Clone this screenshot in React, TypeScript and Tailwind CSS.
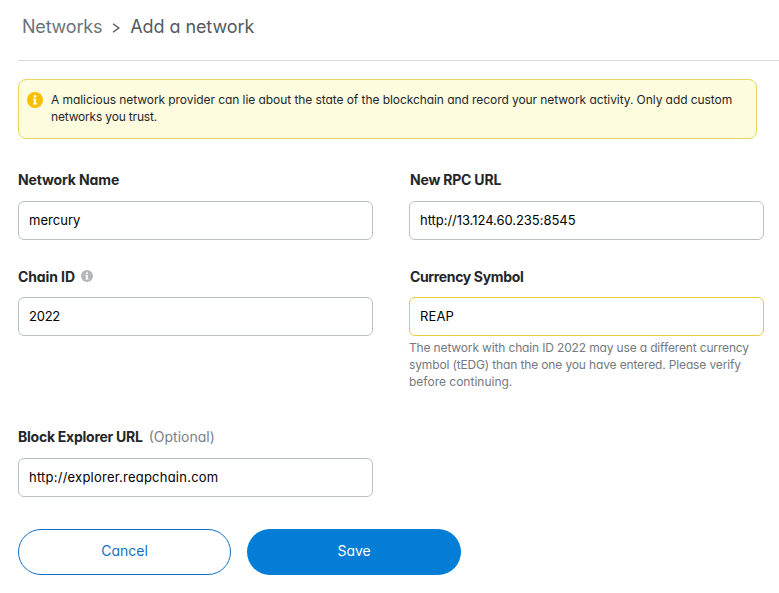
import type { ReactNode } from 'react';

function InfoIcon({ className }: { className: string }) {
  return (
    <svg viewBox="0 0 16 16" className={className} aria-hidden="true">
      <circle cx="8" cy="8" r="8" fill="currentColor" />
      <circle cx="8" cy="4.4" r="1.35" fill="#fff" />
      <path d="M5.9 6.7h3.2v4.5h1v1.4H5.9v-1.4h1V8.1h-1z" fill="#fff" />
    </svg>
  );
}

interface FieldProps {
  label: ReactNode;
  value: string;
  border?: string;
  gap?: string;
  tracking?: string;
  children?: ReactNode;
}

function Field({ label, value, border = 'border-[#bbc0c5]', gap = 'mt-[11px]', tracking = '', children }: FieldProps) {
  return (
    <div className="w-[355px]">
      <div className="flex h-5 items-center whitespace-nowrap text-sm font-bold text-[#24272a]">{label}</div>
      <div className={`flex h-[39px] items-center rounded-md border px-2.5 text-[13px] text-black ${gap} ${border}`}>
        <span className={tracking}>{value}</span>
      </div>
      {children}
    </div>
  );
}

export default function App() {
  return (
    <div className="h-[593px] overflow-hidden bg-white pl-[18px] font-['Inter',sans-serif] [font-feature-settings:'cv11']">
      <header className="flex h-[61px] items-start border-b border-[#d6d9dc] pl-1 pt-[13px] text-lg leading-7">
        <span className="tracking-[-0.2px] text-[#6a737d]">Networks</span>
        <svg viewBox="0 0 8 10" className="ml-[10px] mt-[10px] h-2.5 w-2" fill="none" stroke="#535a61" strokeWidth="1.4">
          <path d="M1 .8 6.8 5 1 9.2" />
        </svg>
        <span className="ml-[10px] tracking-[-0.08px] text-[#535a61]">Add a network</span>
      </header>

      <div className="mt-[18px] flex h-[60px] w-[739px] rounded-lg border border-[#e8d75e] bg-[#fefcde] pl-2 pt-3 text-xs leading-[17px] text-[#24272a]">
        <InfoIcon className="h-4 w-4 shrink-0 text-[#f8c000]" />
        <p className="-mt-px ml-2 whitespace-nowrap">
          <span className="block tracking-[-0.07px]">
            A malicious network provider can lie about the state of the blockchain and record your network activity. Only add custom
          </span>
          <span className="block tracking-[-0.18px]">networks you trust.</span>
        </p>
      </div>

      <div className="mt-[31px] grid grid-cols-[355px_355px] gap-x-9">
        <div className="h-[97px]">
          <Field label={<span className="tracking-[-0.13px]">Network Name</span>} value="mercury" tracking="tracking-[0.03px]" />
        </div>
        <Field
          label={<span className="ml-px tracking-[-0.2px]">New RPC URL</span>}
          value="http://13.124.60.235:8545"
          tracking="tracking-[-0.04px]"
        />
        <div className="h-[160px]">
          <Field
            label={
              <>
                <span className="tracking-[-0.1px]">Chain ID</span>
                <InfoIcon className="mb-0.5 ml-[6px] h-3 w-3 text-[#b4b7ba]" />
              </>
            }
            value="2022"
            gap="mt-[10px]"
            tracking="tracking-[-0.25px]"
          />
        </div>
        <Field
          label={<span className="ml-px tracking-[-0.35px]">Currency Symbol</span>}
          value="REAP"
          border="border-[#e8cc3e]"
          gap="mt-[10px]"
          tracking="tracking-[0.1px]"
        >
          <p className="mt-[3px] whitespace-nowrap text-xs leading-[17px] text-[#737a81]">
            <span className="block tracking-[-0.15px]">The network with chain ID 2022 may use a different currency</span>
            <span className="block tracking-[-0.14px]">symbol (tEDG) than the one you have entered. Please verify</span>
            <span className="block">before continuing.</span>
          </p>
        </Field>
        <Field
          label={
            <>
              <span className="tracking-[-0.25px]">Block Explorer URL</span>
              <span className="ml-[6px] font-normal text-[#7b8188]">(Optional)</span>
            </>
          }
          value="http://explorer.reapchain.com"
          tracking="tracking-[0.23px]"
        />
      </div>

      <div className="mt-8 flex gap-4 text-sm">
        <button className="h-[46px] w-[213px] rounded-full border border-[#1073c6] pb-0.5 text-[#1073c6]">Cancel</button>
        <button className="h-[46px] w-[214px] rounded-full bg-[#037dd6] pb-0.5 tracking-[-0.1px] text-white">Save</button>
      </div>
    </div>
  );
}
